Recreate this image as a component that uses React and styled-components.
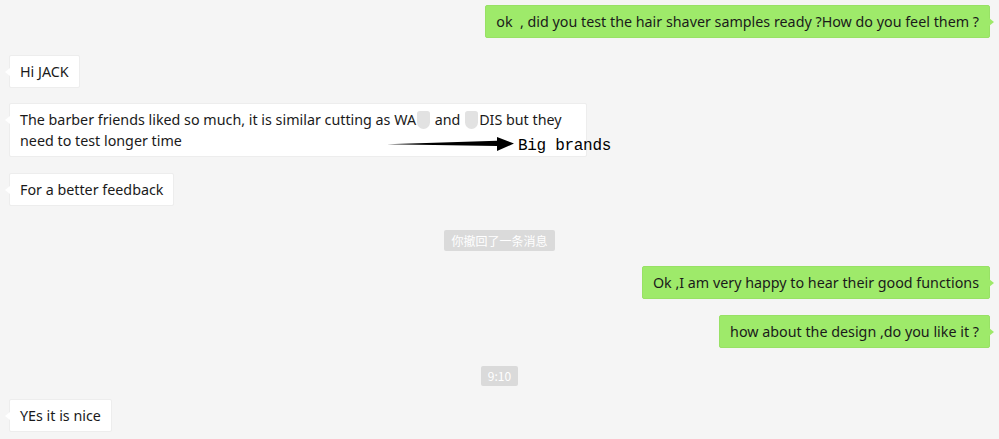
import React from "react";
import styled, { createGlobalStyle, css } from "styled-components";

const Global = createGlobalStyle`
  html, body { margin: 0; padding: 0; background: #f5f5f5; }
  body { font-family: "Noto Sans", "Noto Sans CJK SC", sans-serif; }
`;

const Page = styled.div`
  width: 999px;
  height: 439px;
  box-sizing: border-box;
  padding: 5px 9px 0 9px;
  display: flex;
  flex-direction: column;
  background: #f5f5f5;
  overflow: hidden;
`;

const Row = styled.div`
  display: flex;
  justify-content: ${(p) =>
    p.$side === "right" ? "flex-end" : p.$side === "center" ? "center" : "flex-start"};
  margin-bottom: ${(p) => p.$gap}px;
`;

const Bubble = styled.div`
  position: relative;
  box-sizing: border-box;
  width: ${(p) => (p.$width ? `${p.$width}px` : "auto")};
  padding: 5px 10px;
  font-size: 14.3px;
  line-height: 21px;
  color: #1a1a1a;
  border-radius: 2px;
  ${(p) =>
    p.$mine
      ? css`
          background: #9eea6a;
          border: 1px solid #98e165;
        `
      : css`
          background: #ffffff;
          border: 1px solid #ededed;
        `}
  &::before {
    content: "";
    position: absolute;
    top: 12px;
    width: 0;
    height: 0;
    border-top: 4px solid transparent;
    border-bottom: 4px solid transparent;
    ${(p) =>
      p.$mine
        ? css`
            right: -5px;
            border-left: 5px solid #9eea6a;
          `
        : css`
            left: -5px;
            border-right: 5px solid #ffffff;
          `}
  }
`;

const Blob = styled.span`
  display: inline-block;
  width: 13px;
  height: 18px;
  margin: 0 1px -4px;
  background: #e2e2e2;
  border-radius: 3px 3px 7px 7px;
  filter: blur(0.6px);
`;

const Annotation = styled.div`
  position: absolute;
  left: 377px;
  top: 29px;
  display: flex;
  align-items: center;
  gap: 3px;
  white-space: nowrap;
  pointer-events: none;
`;

const AnnotationText = styled.span`
  font-family: "Liberation Mono", "DejaVu Sans Mono", monospace;
  font-size: 16px;
  line-height: 18px;
  color: #000;
  margin-top: 4px;
  letter-spacing: -0.3px;
`;

const Tag = styled.div`
  background: #dadada;
  color: #ffffff;
  font-size: 12px;
  line-height: ${(p) => p.$lh}px;
  padding: 2px 7px;
  border-radius: 2px;
  font-family: "Noto Sans CJK SC", "Noto Sans", sans-serif;
`;

const Arrow = () => (
  <svg width="128" height="16" viewBox="0 0 128 16">
    <path d="M0 8.2 L110 4.8 L110 1 L127 7.5 L110 15 L110 10 Z" fill="#000" />
  </svg>
);

export default function App() {
  return (
    <>
      <Global />
      <Page>
        <Row $side="right" $gap={17}>
          <Bubble $mine>ok{"\u00a0 "}, did you test the hair shaver samples ready ?How do you feel them ?</Bubble>
        </Row>
        <Row $gap={15}>
          <Bubble>Hi JACK</Bubble>
        </Row>
        <Row $gap={16}>
          <Bubble $width={578}>
            The barber friends liked so much, it is similar cutting as WA<Blob /> and <Blob />DIS but they
            need to test longer time
            <Annotation>
              <Arrow />
              <AnnotationText>Big brands</AnnotationText>
            </Annotation>
          </Bubble>
        </Row>
        <Row $gap={24}>
          <Bubble>For a better feedback</Bubble>
        </Row>
        <Row $side="center" $gap={15}>
          <Tag $lh={17}>你撤回了一条消息</Tag>
        </Row>
        <Row $side="right" $gap={16}>
          <Bubble $mine>Ok ,I am very happy to hear their good functions</Bubble>
        </Row>
        <Row $side="right" $gap={18}>
          <Bubble $mine>how about the design ,do you like it ?</Bubble>
        </Row>
        <Row $side="center" $gap={13}>
          <Tag $lh={16}>9:10</Tag>
        </Row>
        <Row $gap={0}>
          <Bubble>YEs it is nice</Bubble>
        </Row>
      </Page>
    </>
  );
}
